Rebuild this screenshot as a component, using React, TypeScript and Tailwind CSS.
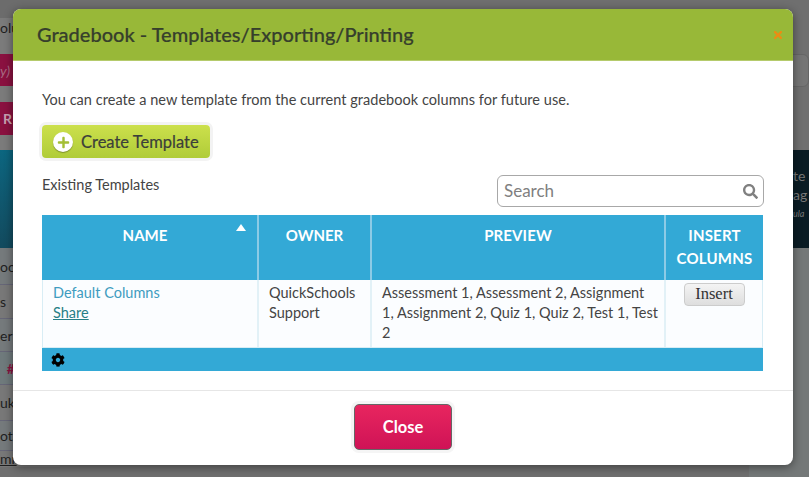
import React from "react";
import { FaSearch, FaCog, FaPlus, FaTimes } from "react-icons/fa";

function LeftRow({ children, cls }: { children?: React.ReactNode; cls: string }) {
  return <div className={`flex items-center overflow-hidden whitespace-nowrap ${cls}`}>{children}</div>;
}

export default function App() {
  return (
    <div className="relative h-[477px] w-[809px] overflow-hidden bg-[#6f6f6f] font-['Lato','Noto_Sans',sans-serif]">
      <div className="flex h-full justify-between">
        <div className="flex w-[60px] flex-col text-[14px] text-[#1f1f1f]">
          <LeftRow cls="h-[18px] bg-[#6c6c6c]" />
          <LeftRow cls="h-[36px] !items-start bg-[#7b7b7b] leading-[20px]">olu</LeftRow>
          <LeftRow cls="h-[32px] bg-[#8a1140] text-[#a86a82] italic">y)</LeftRow>
          <LeftRow cls="h-[16px] bg-[#7b7b7b]" />
          <LeftRow cls="h-[33px] bg-[#8a1140] pl-[3px] font-bold text-[#c8a0b0]">R</LeftRow>
          <LeftRow cls="h-[15px] bg-[#7b7b7b]" />
          <LeftRow cls="h-[98px] bg-gradient-to-b from-[#0b6680] to-[#124a5e]" />
          <LeftRow cls="h-[37px] border-b border-[#667] bg-[#757a7c]">oo</LeftRow>
          <LeftRow cls="h-[34px] border-b border-[#667] bg-[#787878]">s</LeftRow>
          <LeftRow cls="h-[33px] border-b border-[#667] bg-[#757a7c]">erl</LeftRow>
          <LeftRow cls="h-[33px] border-b border-[#667] bg-[#6f7a7c] font-bold text-[#8a1140]">&nbsp;&nbsp;#</LeftRow>
          <LeftRow cls="h-[36px] border-b border-[#667] bg-[#787878]">uk</LeftRow>
          <LeftRow cls="h-[30px] border-b border-[#667] bg-[#757a7c]">ota</LeftRow>
          <LeftRow cls="h-[16px] !items-start bg-[#787878] leading-[16px] underline">mr</LeftRow>
        </div>
        <div className="flex w-[60px] flex-col text-[14px] text-[#777]">
          <div className="h-[54px] bg-[#6f6f6f]" />
          <div className="h-[33px] rounded-r-md border border-[#666] bg-[#757575]" />
          <div className="h-[63px] bg-[#6f6f6f]" />
          <div className="flex h-[98px] flex-col bg-[#0a1c24] pl-[44px] pt-[16px] leading-[19px] whitespace-nowrap">
            <span>te</span>
            <span>ag</span>
            <span className="text-[9px] italic">ula</span>
          </div>
          <div className="flex-1 bg-[#747878]" />
        </div>
      </div>

      <div className="absolute left-[13px] top-[9px] flex h-[456px] w-[780px] flex-col rounded-[8px] bg-white shadow-[0_2px_10px_rgba(0,0,0,0.45)]">
        <div className="flex h-[52px] shrink-0 items-center justify-between rounded-t-[8px] border-b border-[#b5cb6c] bg-[#98b838] pb-[2px] pl-[24px] pr-[9px]">
          <h1 className="text-[20px] font-medium text-[#363f2c] [-webkit-text-stroke:0.2px_#363f2c]">Gradebook - Templates/Exporting/Printing</h1>
          <FaTimes size={12} className="mt-[3px] text-[#ec8c13]" />
        </div>
        <div className="flex-1 px-[29px] pt-[30px] text-[14.5px] text-[#444]">
          <p className="leading-[18px] tracking-[0.04px]">You can create a new template from the current gradebook columns for future use.</p>
          <button className="mt-[16px] flex h-[33px] w-[168px] items-center rounded-[4px] bg-gradient-to-b from-[#cce04c] to-[#b0cc38] pl-[11px] pt-[1px] text-[16.5px] text-[#3b3f3a] shadow-[0_0_0_3px_#f3f3f3] [-webkit-text-stroke:0.2px_#3b3f3a]">
            <span className="flex h-[20px] w-[20px] items-center justify-center rounded-full bg-white shadow-[0_1px_1px_rgba(0,0,0,0.3)]">
              <FaPlus size={13} className="text-[#a4bf35]" />
            </span>
            <span className="ml-[8px]">Create Template</span>
          </button>
          <div className="mt-[17px] flex items-start justify-between">
            <span className="mt-[1px] leading-[18px]">Existing Templates</span>
            <div className="flex h-[32px] w-[267px] items-center justify-between rounded-[6px] border border-[#a8a8a8] bg-white pl-[6px] pr-[5px]">
              <span className="text-[17px] text-[#808080]">Search</span>
              <FaSearch size={15} className="text-[#808080]" />
            </div>
          </div>
          <div className="mt-[8px] w-[721px]">
            <div className="grid h-[65px] grid-cols-[217px_113px_294px_97px] bg-[#33a9d6] text-center text-[15px] font-bold leading-[23px] text-white">
              <div className="relative border-r-2 border-[#8ccbe6] pr-[9px] pt-[9px]">
                NAME
                <span className="absolute right-[11px] top-[9px] h-0 w-0 border-x-[5px] border-b-[7px] border-x-transparent border-b-white" />
              </div>
              <div className="border-r-2 border-[#8ccbe6] pt-[9px]">OWNER</div>
              <div className="border-r-2 border-[#8ccbe6] pt-[9px] tracking-[0.1px]">PREVIEW</div>
              <div className="pt-[9px] tracking-[0.2px]">INSERT COLUMNS</div>
            </div>
            <div className="grid h-[68px] grid-cols-[216px_113px_294px_96px] border-x border-b border-[#d8edf5] bg-[#fbfdff] leading-[20px]">
              <div className="border-r-2 border-[#e2f1f7] pl-[10px] pt-[3px]">
                <div className="text-[#3f9cc0]">Default Columns</div>
                <div className="text-[#267f86] underline">Share</div>
              </div>
              <div className="border-r-2 border-[#e2f1f7] pl-[10px] pr-[4px] pt-[3px]">QuickSchools Support</div>
              <div className="border-r-2 border-[#e2f1f7] pl-[10px] pr-[6px] pt-[3px]">
                Assessment 1, Assessment 2, Assignment 1, Assignment 2, Quiz 1, Quiz 2, Test 1, Test 2
              </div>
              <div className="pt-[3px] text-center">
                <button className="h-[23px] w-[61px] rounded-[4px] border border-[#ccc] bg-gradient-to-b from-[#f4f4f4] to-[#dedede] font-['Liberation_Serif',serif] text-[16.5px] leading-none text-[#333]">
                  Insert
                </button>
              </div>
            </div>
            <div className="flex h-[23px] items-center bg-[#33a9d6] pl-[9px]">
              <FaCog size={14} className="text-black" />
            </div>
          </div>
        </div>
        <div className="flex h-[75px] shrink-0 justify-center border-t border-[#e6e6e6] pt-[13px]">
          <button className="h-[46px] w-[98px] rounded-[5px] border border-[#666] bg-gradient-to-b from-[#e8255f] to-[#cf1256] pt-[1px] text-[16.5px] font-bold text-white shadow-[0_0_0_3px_#f5f5f5]">
            Close
          </button>
        </div>
      </div>
    </div>
  );
}
